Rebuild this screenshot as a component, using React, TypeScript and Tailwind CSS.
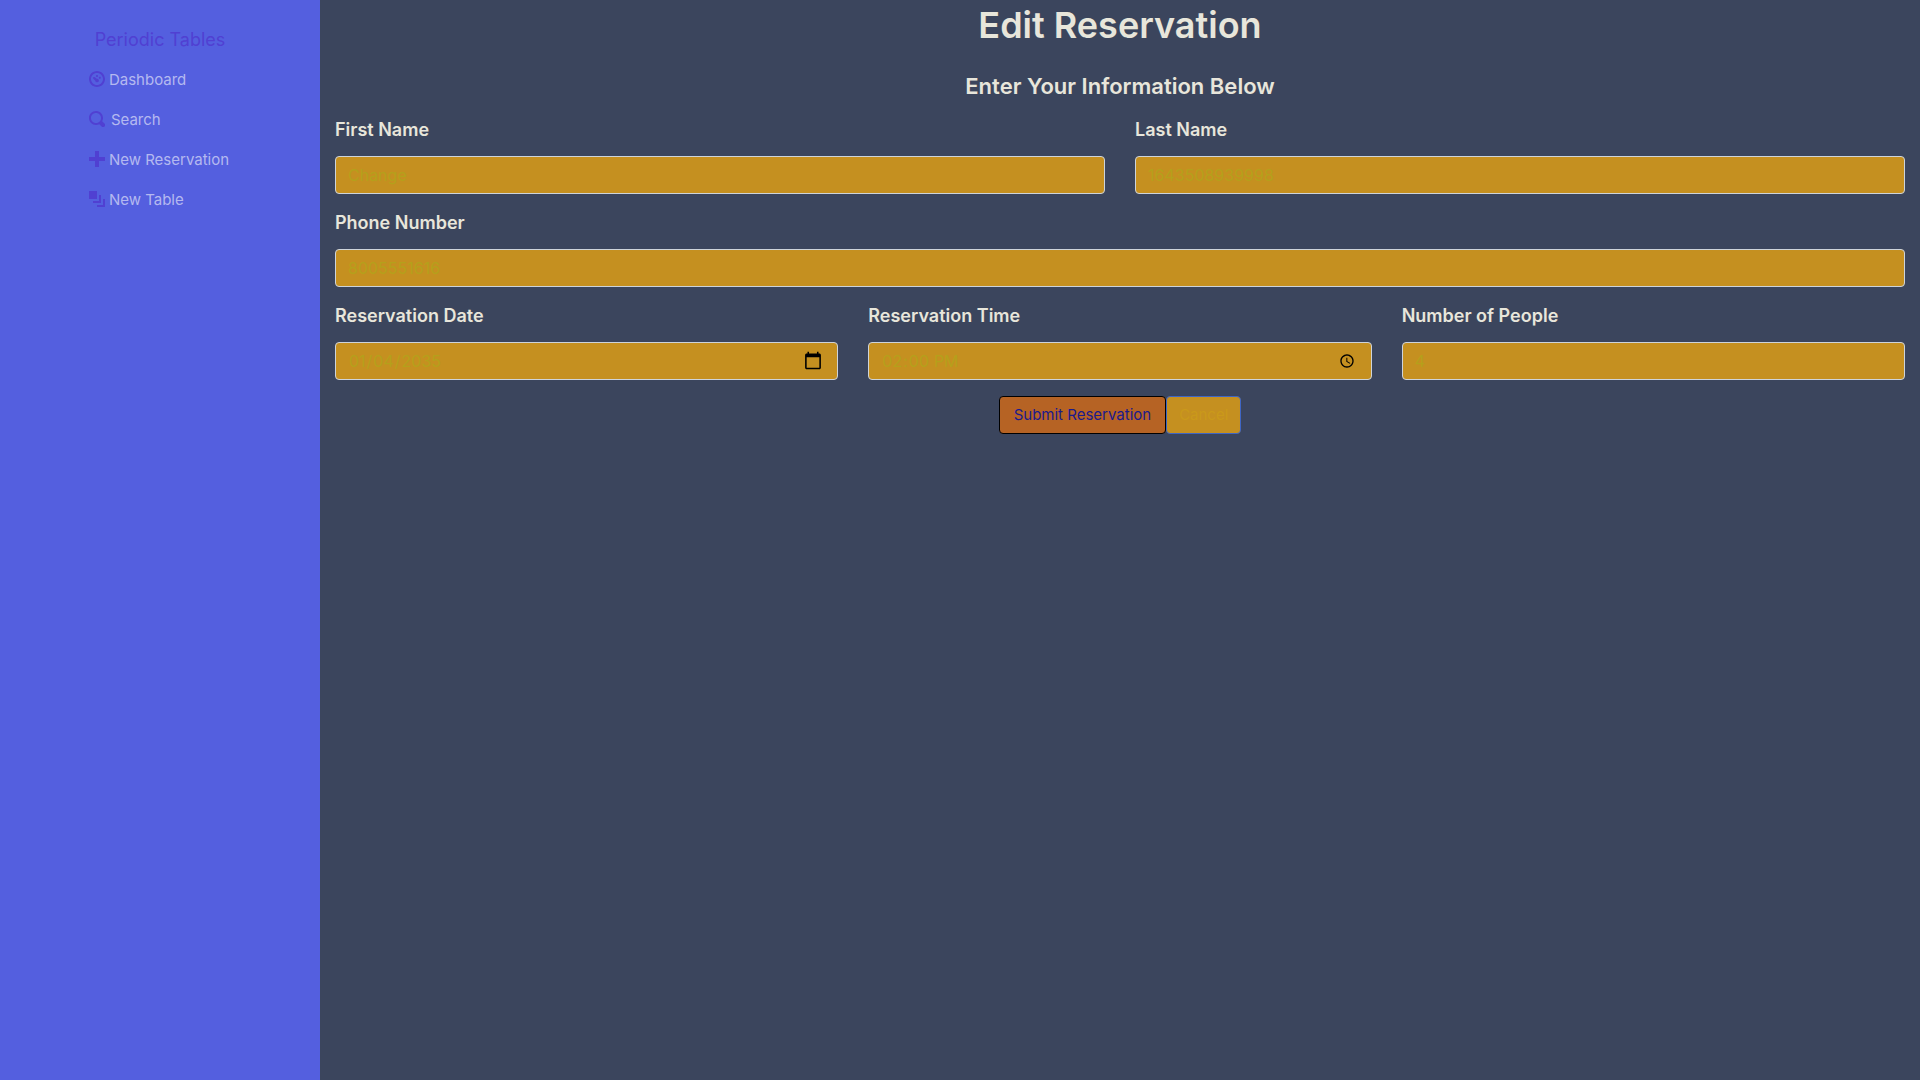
import React from "react";

const icons = {
  dashboard:
    "M4 0c-2.2 0-4 1.8-4 4s1.8 4 4 4 4-1.8 4-4-1.8-4-4-4zm0 1c1.66 0 3 1.34 3 3s-1.34 3-3 3-3-1.34-3-3 1.34-3 3-3zm0 1c-.28 0-.5.22-.5.5s.22.5.5.5.5-.22.5-.5-.22-.5-.5-.5zM2.34 3a.5.5 0 0 0-.19.84l1 1a.9.9 0 1 0 .7-.95l-.9-.75a.5.5 0 0 0-.61-.14zM5.4 2.9c-.28 0-.5.22-.5.5s.22.5.5.5.5-.22.5-.5-.22-.5-.5-.5z",
  search:
    "M3.5 0c-1.93 0-3.5 1.57-3.5 3.5s1.57 3.5 3.5 3.5c.59 0 1.17-.14 1.66-.41a1 1 0 0 0 .13.13l1 1a1.02 1.02 0 1 0 1.44-1.44l-1-1a1 1 0 0 0-.16-.13c.27-.49.44-1.06.44-1.66 0-1.93-1.55-3.5-3.5-3.5zm0 1c1.39 0 2.5 1.11 2.5 2.5 0 .66-.24 1.27-.66 1.72l-.03.03a1 1 0 0 0-.13.13c-.44.4-1.04.63-1.69.63-1.39 0-2.5-1.11-2.5-2.5s1.11-2.5 2.5-2.5z",
  plus: "M3 0v3h-3v2h3v3h2v-3h3v-2h-3v-3h-2z",
  layers: "M0 0v4h4v-4h-4zm5 2v3h-3v1h4v-4h-1zm2 2v3h-3v1h4v-4h-1z",
};

function NavItem({ icon, label, wide }: { icon: keyof typeof icons; label: string; wide?: boolean }) {
  return (
    <li>
      <a href="#" className={wide ? "flex items-center gap-1.5 py-2" : "flex items-center gap-1 py-2"}>
        <svg viewBox="0 0 8 8" className="mb-0.5 size-4 fill-[#5040d2]" aria-hidden="true">
          <path d={icons[icon]} />
        </svg>
        <span>{label}</span>
      </a>
    </li>
  );
}

function Field({ id, label, type, value }: { id: string; label: string; type: string; value: string }) {
  return (
    <div className="min-w-0 flex-1">
      <label htmlFor={id} className="mb-3.5 block text-[18px] leading-[25px] font-semibold">
        {label}
      </label>
      <input
        id={id}
        type={type}
        defaultValue={value}
        className="block h-[38px] w-full rounded border border-[#ced4da] bg-[#c59020] px-3 py-1.5 text-[16px] leading-6 text-[#b5a01b] [&[type=date]::-webkit-calendar-picker-indicator]:size-5"
      />
    </div>
  );
}

export default function App() {
  return (
    <div className="flex min-h-screen bg-[#3b455d] font-[Inter,sans-serif] text-[15px] leading-6 text-[#e8e6db]">
      <nav className="flex w-1/6 flex-col items-center bg-[#545fdf] pt-5">
        <a href="#" className="py-2 text-[18px] text-[#5040d2]">
          Periodic Tables
        </a>
        <ul className="pr-0.5 text-[#b4b9f0]">
          <NavItem icon="dashboard" label="Dashboard" />
          <NavItem icon="search" label="Search" wide />
          <NavItem icon="plus" label="New Reservation" />
          <NavItem icon="layers" label="New Table" />
        </ul>
      </nav>
      <main className="min-w-0 flex-1 px-[15px]">
        <h1 className="text-center text-[36px] leading-[50px] font-semibold">Edit Reservation</h1>
        <h2 className="mt-[22px] mb-4 text-center text-[22px] leading-[29px] font-semibold">Enter Your Information Below</h2>
        <form className="flex flex-col gap-4" onSubmit={(e) => e.preventDefault()}>
          <div className="flex gap-[30px]">
            <Field id="first" label="First Name" type="text" value="Change" />
            <Field id="last" label="Last Name" type="text" value="1643508939998" />
          </div>
          <Field id="phone" label="Phone Number" type="text" value="8005551616" />
          <div className="flex gap-[30px]">
            <Field id="date" label="Reservation Date" type="date" value="2035-01-04" />
            <Field id="time" label="Reservation Time" type="time" value="14:00" />
            <Field id="people" label="Number of People" type="number" value="4" />
          </div>
          <div className="flex justify-center">
            <button type="submit" className="h-[38px] rounded border border-black bg-[#b66324] px-3.5 text-[#1b1a8c]">
              Submit Reservation
            </button>
            <button type="button" className="h-[38px] rounded border border-[#3f66c4] bg-[#c59020] px-3 text-[#ca991a]">
              Cancel
            </button>
          </div>
        </form>
      </main>
    </div>
  );
}
